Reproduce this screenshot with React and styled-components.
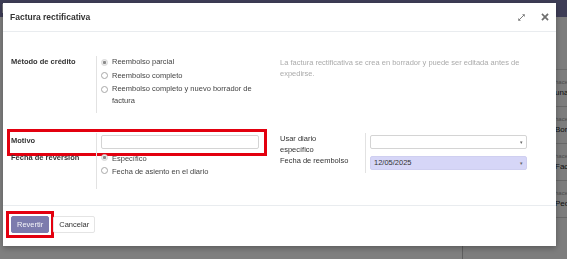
import React from "react";
import styled, { createGlobalStyle } from "styled-components";

const GlobalStyle = createGlobalStyle`
  html, body {
    margin: 0;
    padding: 0;
    overflow: hidden;
  }
  body {
    font-family: "Liberation Sans", Arial, sans-serif;
    font-size: 7.5px;
    color: #333;
  }
`;

const menuItems = [
  "Contabilidad",
  "Declaraciones AEAT",
  "Activos",
  "Informes",
  "Configuración",
  "Ayuda",
];

const messages = [
  { meta: "hace 3 minutos", text: "una factura" },
  { meta: "hace 5 minutos", text: "Borrador → Publicado" },
  { meta: "hace 5 minutos", text: "Factura de proveedor creada" },
  { meta: "hace 6 minutos", text: "Pedido de compra" },
];

const App = () => {
  return (
    <>
      <GlobalStyle />
      <Page>
        <Navbar>
          <MenuToggle />
          {menuItems.map((item) => (
            <NavItem key={item}>{item}</NavItem>
          ))}
        </Navbar>
        <Main>
          <Content />
          <Chatter>
            <ChatterTop />
            {messages.map((m, i) => (
              <Message key={i}>
                <MessageMeta>{m.meta}</MessageMeta>
                <MessageText>{m.text}</MessageText>
              </Message>
            ))}
          </Chatter>
        </Main>
      </Page>

      <Backdrop />

      <Modal>
        <ModalHeader>
          <Title>Factura rectificativa</Title>
          <HeaderIcons>
            <IconButton aria-label="Expandir">
              <svg width="9" height="9" viewBox="0 0 10 10">
                <path d="M2 8 L8 2" stroke="#7a7a7a" strokeWidth="1.1" />
                <path d="M5.6 1.4 H8.6 V4.4 Z" fill="#7a7a7a" />
                <path d="M1.4 5.6 V8.6 H4.4 Z" fill="#7a7a7a" />
              </svg>
            </IconButton>
            <IconButton aria-label="Cerrar">
              <svg width="8" height="8" viewBox="0 0 10 10">
                <path
                  d="M2 2 L8 8 M8 2 L2 8"
                  stroke="#6f6f6f"
                  strokeWidth="2.2"
                  strokeLinecap="square"
                />
              </svg>
            </IconButton>
          </HeaderIcons>
        </ModalHeader>

        <ModalBody>
          <Section>
            <Group>
              <FieldRow>
                <Label>Método de crédito</Label>
                <Value $pb={4}>
                  <RadioItem>
                    <Radio $checked />
                    <span>Reembolso parcial</span>
                  </RadioItem>
                  <RadioItem>
                    <Radio />
                    <span>Reembolso completo</span>
                  </RadioItem>
                  <RadioItem>
                    <Radio />
                    <span>Reembolso completo y nuevo borrador de factura</span>
                  </RadioItem>
                </Value>
              </FieldRow>
            </Group>
            <RightGroup>
              <HelpText>
                La factura rectificativa se crea en borrador y puede ser
                editada antes de expedirse.
              </HelpText>
            </RightGroup>
          </Section>

          <Section $mt={20}>
            <Group>
              <FieldRow $highlight>
                <Label $pt={2}>Motivo</Label>
                <Value $pt={2} $pb={3}>
                  <TextInput type="text" />
                </Value>
              </FieldRow>
              <FieldRow>
                <Label>Fecha de reversión</Label>
                <Value $pb={11}>
                  <RadioItem $single>
                    <Radio $checked />
                    <span>Específico</span>
                  </RadioItem>
                  <RadioItem $single>
                    <Radio />
                    <span>Fecha de asiento en el diario</span>
                  </RadioItem>
                </Value>
              </FieldRow>
            </Group>
            <RightGroup>
              <FieldRow>
                <Label $plain>Usar diario específico</Label>
                <Value $pt={2} $pb={0}>
                  <Select>
                    <Caret>▾</Caret>
                  </Select>
                </Value>
              </FieldRow>
              <FieldRow>
                <Label $plain>Fecha de reembolso</Label>
                <Value $pt={1} $pb={3}>
                  <Select $filled>
                    12/05/2025
                    <Caret>▾</Caret>
                  </Select>
                </Value>
              </FieldRow>
            </RightGroup>
          </Section>
        </ModalBody>

        <ModalFooter>
          <Highlight>
            <Button $primary>Revertir</Button>
          </Highlight>
          <Button>Cancelar</Button>
        </ModalFooter>
      </Modal>
    </>
  );
};

/* ---------- background page ---------- */

const Page = styled.div`
  display: flex;
  flex-direction: column;
  height: 100vh;
  background: #fff;
`;

const Navbar = styled.nav`
  display: flex;
  align-items: center;
  gap: 16px;
  height: 17px;
  padding-left: 2px;
  background: #7c7bad;
  color: #fff;
  font-size: 8.5px;
  flex-shrink: 0;
`;

const MenuToggle = styled.span`
  width: 4px;
  height: 9px;
  background: #e8e8f2;
`;

const NavItem = styled.span`
  white-space: nowrap;
`;

const Main = styled.div`
  flex: 1;
  display: flex;
`;

const Content = styled.div`
  flex: 1;
  background: #fff;
`;

const Chatter = styled.aside`
  width: 104px;
  border-left: 1px solid #bdbdbd;
  background: #fafafa;
  display: flex;
  flex-direction: column;
  overflow: hidden;
`;

const ChatterTop = styled.div`
  height: 52px;
  border-bottom: 1px solid #d8d8d8;
`;

const Message = styled.div`
  padding: 8px 0 8px 92px;
  border-bottom: 1px solid #d0d0d0;
  white-space: nowrap;
`;

const MessageMeta = styled.div`
  font-size: 6px;
  color: #999;
  line-height: 9px;
`;

const MessageText = styled.div`
  font-size: 8px;
  color: #222;
  line-height: 11px;
`;

const Backdrop = styled.div`
  position: fixed;
  inset: 0;
  background: rgba(0, 0, 0, 0.5);
`;

/* ---------- modal ---------- */

const Modal = styled.div`
  position: fixed;
  top: 3px;
  left: 3px;
  width: 553px;
  height: 243px;
  background: #fff;
  display: flex;
  flex-direction: column;
  box-shadow: 0 2px 6px rgba(0, 0, 0, 0.3);
`;

const ModalHeader = styled.div`
  display: flex;
  align-items: center;
  justify-content: space-between;
  height: 28px;
  padding: 0 7px 0 7px;
  border-bottom: 1px solid #e9ecef;
  flex-shrink: 0;
`;

const Title = styled.h4`
  margin: 0;
  font-size: 8.5px;
  font-weight: bold;
  color: #333;
`;

const HeaderIcons = styled.div`
  display: flex;
  align-items: center;
  gap: 15px;
`;

const IconButton = styled.span`
  display: flex;
  align-items: center;
`;

const ModalBody = styled.div`
  flex: 1;
  padding: 24px 0 0 8px;
`;

const Section = styled.div`
  display: flex;
  gap: 17px;
  margin-top: ${(p) => p.$mt || 0}px;
`;

const Group = styled.div`
  width: 252px;
  display: flex;
  flex-direction: column;
`;

const RightGroup = styled.div`
  width: 252px;
  display: flex;
  flex-direction: column;
`;

const FieldRow = styled.div`
  display: flex;
  outline: ${(p) => (p.$highlight ? "3px solid #e3000f" : "none")};
  outline-offset: 1px;
`;

const Label = styled.div`
  width: 85px;
  flex-shrink: 0;
  padding-top: ${(p) => p.$pt || 0}px;
  padding-right: ${(p) => (p.$plain ? 14 : 6)}px;
  font-weight: ${(p) => (p.$plain ? "normal" : "bold")};
  color: #333;
  line-height: 11px;
  box-sizing: border-box;
`;

const Value = styled.div`
  flex: 1;
  border-left: 1px solid #e2e2e2;
  padding: ${(p) => p.$pt || 0}px 4px ${(p) => p.$pb || 0}px 4px;
  min-width: 0;
`;

const RadioItem = styled.label`
  display: flex;
  align-items: flex-start;
  gap: 4px;
  line-height: ${(p) => (p.$single ? 13 : 12)}px;
  margin-bottom: ${(p) => (p.$single ? 0 : 1.5)}px;
  color: #444;
`;

const Radio = styled.span`
  flex-shrink: 0;
  width: 7px;
  height: 7px;
  margin-top: 2.5px;
  border-radius: 50%;
  box-sizing: border-box;
  border: 1px solid ${(p) => (p.$checked ? "#d6d6d6" : "#a8a8a8")};
  background: ${(p) =>
    p.$checked
      ? "radial-gradient(circle, #8a8a8a 0 1.3px, #ececec 1.8px)"
      : "#fff"};
`;

const HelpText = styled.div`
  color: #ababab;
  line-height: 11px;
  padding-top: 1px;
`;

const TextInput = styled.input`
  display: block;
  width: 100%;
  height: 14px;
  box-sizing: border-box;
  border: 1px solid #d4d4d4;
  border-radius: 2px;
  background: #fff;
  margin: 0;
  padding: 0 3px;
  font: inherit;
`;

const Select = styled.div`
  position: relative;
  width: 157px;
  height: 14px;
  box-sizing: border-box;
  border: 1px solid ${(p) => (p.$filled ? "#cfcff0" : "#d4d4d4")};
  border-radius: 2px;
  background: ${(p) => (p.$filled ? "#d6d6f7" : "#fff")};
  padding-left: 3px;
  display: flex;
  align-items: center;
  color: #333;
`;

const Caret = styled.span`
  position: absolute;
  right: 3px;
  top: 50%;
  transform: translateY(-50%);
  font-size: 5px;
  color: #666;
`;

const ModalFooter = styled.div`
  display: flex;
  gap: 4px;
  align-items: center;
  padding: 10px 8px 13px 8px;
  border-top: 1px solid #e9ecef;
  flex-shrink: 0;
`;

const Highlight = styled.span`
  display: flex;
  outline: 3px solid #e3000f;
  outline-offset: 2px;
`;

const Button = styled.button`
  height: 17px;
  padding: 0 5px;
  margin: 0;
  font: inherit;
  font-size: 7.5px;
  border-radius: 2px;
  border: 1px solid ${(p) => (p.$primary ? "#7c7bad" : "#e4e4e4")};
  background: ${(p) => (p.$primary ? "#7c7bad" : "#fff")};
  color: ${(p) => (p.$primary ? "#f4f4f8" : "#333")};
`;

export default App;
